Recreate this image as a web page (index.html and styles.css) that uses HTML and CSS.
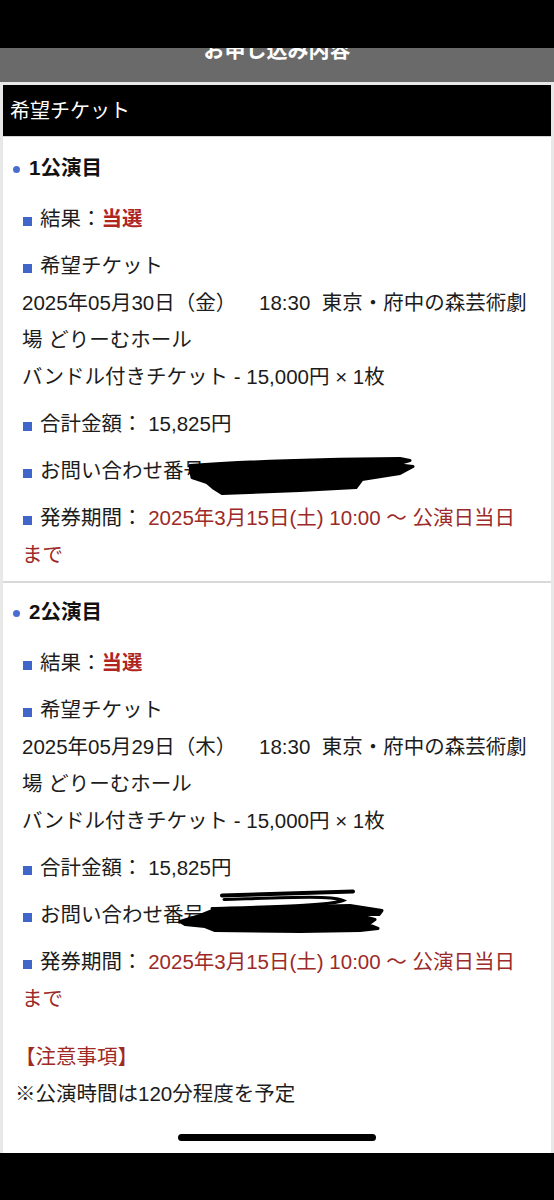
FILE: index.html
```html
<!DOCTYPE html>
<html lang="ja">
<head>
    <meta charset="UTF-8">
    <meta name="viewport" content="width=device-width, initial-scale=1.0">
    <title>お申し込み内容</title>
    <link rel="stylesheet" href="styles.css">
</head>
<body>
    <div class="status"></div>
    <div class="topbar">
        <h1>お申し込み内容</h1>
    </div>

    <div class="page">
        <div class="box">
            <h2 class="box-title">希望チケット</h2>

            <div class="perf">
                <h3><span class="dot"></span>1公演目</h3>
                <div class="item"><span class="sq"></span>結果：<strong class="win">当選</strong></div>
                <div class="item"><span class="sq"></span>希望チケット<br>2025年05月30日（金）&nbsp;&nbsp;&nbsp; 18:30&nbsp; 東京・府中の森芸術劇場 どりーむホール<br>バンドル付きチケット - 15,000円 × 1枚</div>
                <div class="item"><span class="sq"></span>合計金額： 15,825円</div>
                <div class="item">
                    <span class="sq"></span>お問い合わせ番号：
                    <svg class="redact redact-1" width="240" height="55" viewBox="182 440.5 240 55">
                        <path d="M190 462 C230 459 300 456 400 455 L410 457 L396 461 L413 463 L400 470 L362 476 L356 484 L300 487 L222 490 L214 485 L207 479 L192 474 Z" fill="#000" stroke="#000" stroke-width="3" stroke-linejoin="round"/>
                    </svg>
                </div>
                <div class="item"><span class="sq"></span>発券期間： <span class="term">2025年3月15日(土) 10:00 〜 公演日当日<span class="nowrap">まで</span></span></div>
            </div>

            <div class="perf">
                <h3><span class="dot"></span>2公演目</h3>
                <div class="item"><span class="sq"></span>結果：<strong class="win">当選</strong></div>
                <div class="item"><span class="sq"></span>希望チケット<br>2025年05月29日（木）&nbsp;&nbsp;&nbsp; 18:30&nbsp; 東京・府中の森芸術劇場 どりーむホール<br>バンドル付きチケット - 15,000円 × 1枚</div>
                <div class="item"><span class="sq"></span>合計金額： 15,825円</div>
                <div class="item">
                    <span class="sq"></span>お問い合わせ番号：
                    <svg class="redact redact-2" width="220" height="60" viewBox="172 878.5 220 60">
                        <path d="M222 894 L353 890" stroke="#000" stroke-width="4" stroke-linecap="round" fill="none"/>
                        <path d="M224 898 C290 896 330 894 343 899 C330 904 280 905 212 907" stroke="#000" stroke-width="3" stroke-linecap="round" fill="none"/>
                        <path d="M180 920 L200 914 L215 908 L300 905 L350 904 L382 909 L379 913 L356 913 L375 918 L368 923 L378 927 L360 929 L300 930 L215 929 L205 925 L185 923 Z" fill="#000" stroke="#000" stroke-width="3" stroke-linejoin="round"/>
                    </svg>
                </div>
                <div class="item"><span class="sq"></span>発券期間： <span class="term">2025年3月15日(土) 10:00 〜 公演日当日<span class="nowrap">まで</span></span></div>
            </div>

            <div class="notice">
                <p class="notice-title">【注意事項】</p>
                <p>※公演時間は120分程度を予定</p>
            </div>

            <div class="home-bar"></div>
        </div>
    </div>

    <div class="bottom"></div>
</body>
</html>
```

FILE: styles.css
```css
body {
    font-family: "Liberation Sans", "Noto Sans CJK JP", sans-serif;
    margin: 0;
    padding: 0;
    background-color: #e8e8e8;
    color: #1c1c1c;
    font-size: 20.5px;
}
.status {
    height: 48px;
    background-color: #000;
}
.topbar {
    height: 34px;
    overflow: hidden;
    background-color: #6a6a6a;
}
.topbar h1 {
    margin: -11px 0 0;
    line-height: 25px;
    font-size: 21px;
    text-align: center;
    color: #fff;
}
.page {
    padding: 3px 3px 0;
}
.box {
    background-color: #fff;
}
.box-title {
    margin: 0;
    height: 51px;
    line-height: 52px;
    padding-left: 7px;
    background-color: #000;
    border-bottom: 1px solid #d4d4d4;
    color: #fff;
    font-size: 20px;
    font-weight: normal;
}
.perf {
    padding: 12px 20px 8px 10px;
}
.perf + .perf {
    border-top: 2px solid #d9d9d9;
    padding-top: 10px;
}
.perf h3 {
    margin: 0 0 14px;
    line-height: 37px;
    font-size: 20.5px;
    font-weight: bold;
    color: #111;
}
.dot {
    display: inline-block;
    width: 7px;
    height: 7px;
    margin-right: 9px;
    border-radius: 50%;
    background-color: #4a6ed0;
    vertical-align: 2px;
}
.item {
    position: relative;
    margin: 0 0 10px 9px;
    line-height: 37px;
}
.item:last-child {
    margin-bottom: 0;
}
.sq {
    display: inline-block;
    width: 9px;
    height: 9px;
    margin: 0 8px 0 1px;
    background-color: #3f66c8;
}
.win {
    color: #b0261f;
}
.term {
    color: #9c2a28;
}
.nowrap {
    white-space: nowrap;
}
.redact {
    position: absolute;
}
.redact-1 {
    left: 160px;
    top: -8px;
}
.redact-2 {
    left: 150px;
    top: -16px;
}
.notice {
    margin-top: 13px;
    padding: 0 12px;
}
.notice p {
    margin: 0;
    line-height: 37px;
}
.notice-title {
    color: #a02a26;
}
.home-bar {
    width: 198px;
    height: 7px;
    margin: 22px auto 0;
    border-radius: 4px;
    background-color: #000;
}
.box::after {
    content: "";
    display: block;
    height: 12px;
}
.bottom {
    height: 48px;
    background-color: #000;
}
```
